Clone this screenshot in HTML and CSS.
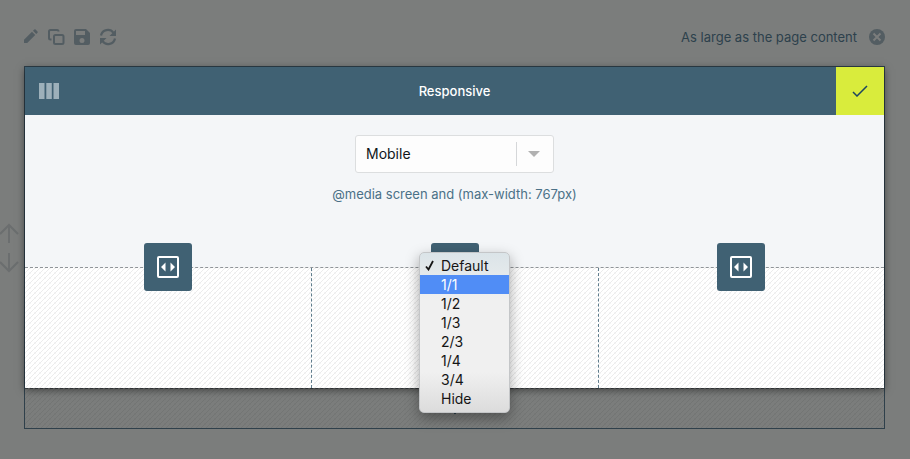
FILE: index.html
```html
<!DOCTYPE html>
<html lang="en">
<head>
<meta charset="utf-8">
<title>Responsive</title>
<link rel="stylesheet" href="styles.css">
</head>
<body>
<div class="toolbar">
  <div class="tools">
    <button class="tool" aria-label="Edit"><svg width="18" height="18" viewBox="0 0 18 18"><path d="M3 11.800V15h3.200l8-8L11 3.800zM15.200 6l1.300-1.300a1 1 0 0 0 0-1.300l-1.900-1.900a1 1 0 0 0-1.300 0L12 2.800z" fill="currentColor"/></svg></button>
    <button class="tool" aria-label="Duplicate"><svg width="18" height="18" viewBox="0 0 18 18"><path d="M4.500 11.500H3.500a1.500 1.500 0 0 1-1.500-1.500V3.500A1.500 1.500 0 0 1 3.500 2H10a1.500 1.500 0 0 1 1.500 1.500M8.500 7H15a1.500 1.500 0 0 1 1.500 1.500v6A1.500 1.500 0 0 1 15 16H8.500A1.500 1.500 0 0 1 7 14.500v-6A1.500 1.500 0 0 1 8.500 7z" fill="none" stroke="currentColor" stroke-width="2"/></svg></button>
    <button class="tool" aria-label="Save"><svg width="18" height="18" viewBox="0 0 18 18"><path fill-rule="evenodd" d="M3 1h10l4 4v10a2 2 0 0 1-2 2H3a2 2 0 0 1-2-2V3a2 2 0 0 1 2-2zm0 2v4h9V3zm6 7a2.500 2.500 0 1 0 0 5 2.500 2.500 0 0 0 0-5z" fill="currentColor"/></svg></button>
    <button class="tool" aria-label="Refresh"><svg width="18" height="18" viewBox="0 0 18 18"><path d="M2 7.500a7 7 0 0 1 12.500-2.700M16 10.500a7 7 0 0 1-12.500 2.700" fill="none" stroke="currentColor" stroke-width="2.200"/><path d="M17 1.500V8h-6.500zM1 16.500V10h6.500z" fill="currentColor"/></svg></button>
  </div>
  <div class="size">
    <span>As large as the page content</span>
    <button class="tool" aria-label="Close"><svg width="16" height="16" viewBox="0 0 16 16"><circle cx="8" cy="8" r="8" fill="currentColor"/><path d="M4.500 4.500l7 7M11.500 4.500l-7 7" stroke="#7b7d7c" stroke-width="2"/></svg></button>
  </div>
</div>

<main class="frame">
  <div class="mover" aria-hidden="true"><svg width="20" height="50" viewBox="0 0 20 50"><path d="M9 20V2M0 11l9-9 9 9M9 30v18M0 39l9 9 9-9" fill="none" stroke="currentColor" stroke-width="2"/></svg></div>
  <section class="dialog">
    <header class="bar">
      <svg class="grip" width="20" height="16" viewBox="0 0 20 16"><path d="M0 0h5.500v16H0zM7.300 0h5.500v16H7.300zM14.500 0H20v16h-5.500z" fill="currentColor"/></svg>
      <h1 class="title">Responsive</h1>
      <button class="confirm" aria-label="Apply"><svg width="16" height="12" viewBox="0 0 16 12"><path d="M1 7l4 4L15 1" fill="none" stroke="currentColor" stroke-width="1.500"/></svg></button>
    </header>
    <div class="settings">
      <div class="picker">
        <select class="device" aria-label="Device"><option>Mobile</option></select>
        <span class="caret"></span>
      </div>
      <p class="query">@media screen and (max-width: 767px)</p>
    </div>
    <div class="columns">
      <div class="column">
        <button class="width" aria-label="Column 1 width"><svg width="22" height="22" viewBox="0 0 22 22"><rect x="1" y="1" width="20" height="20" rx="1" fill="none" stroke="currentColor" stroke-width="2"/><path d="M8.500 6.500v9L4 11zM13.500 6.500v9L18 11z" fill="currentColor"/></svg></button>
      </div>
      <div class="column">
        <button class="width" aria-label="Column 2 width"></button>
        <ul class="menu" role="listbox" aria-label="Column width">
          <li class="option" role="option" aria-selected="true"><svg class="tick" width="9" height="11" viewBox="0 0 9 11"><path d="M1 6.500l2.500 3L8 1" fill="none" stroke="currentColor" stroke-width="1.800"/></svg>Default</li>
          <li class="option active" role="option">1/1</li>
          <li class="option" role="option">1/2</li>
          <li class="option" role="option">1/3</li>
          <li class="option" role="option">2/3</li>
          <li class="option" role="option">1/4</li>
          <li class="option" role="option">3/4</li>
          <li class="option" role="option">Hide</li>
        </ul>
      </div>
      <div class="column">
        <button class="width" aria-label="Column 3 width"><svg width="22" height="22" viewBox="0 0 22 22"><rect x="1" y="1" width="20" height="20" rx="1" fill="none" stroke="currentColor" stroke-width="2"/><path d="M8.500 6.500v9L4 11zM13.500 6.500v9L18 11z" fill="currentColor"/></svg></button>
      </div>
    </div>
  </section>
  <div class="rest"><button class="tool add" aria-label="Add"><svg width="10" height="10" viewBox="0 0 10 10"><path d="M5 0v10M0 5h10" stroke="currentColor" stroke-width="2"/></svg></button></div>
</main>
</body>
</html>
```
FILE: styles.css
```css
* { box-sizing: border-box; }
body {
  margin: 0;
  padding: 24px 25px 30px 24px;
  background: #7b7d7c;
  font: 13px/20px Inter, "Liberation Sans", sans-serif;
  color: #2d414c;
}
button { margin: 0; padding: 0; border: 0; background: none; color: inherit; font: inherit; cursor: pointer; }
svg { display: block; }

.toolbar {
  display: flex;
  justify-content: space-between;
  align-items: center;
  height: 25px;
  margin-bottom: 17px;
}
.tools { display: flex; gap: 8px; margin-left: -3px; }
.size { display: flex; align-items: center; gap: 12px; }
.tool { color: #535d62; }

.frame { position: relative; border: 1px solid #2f404b; }
.mover { position: absolute; left: -25px; top: 156px; color: #6b6e6f; }
.dialog { position: relative; background: #f4f6f8; box-shadow: 0 2px 8px rgba(0, 0, 0, 0.5); }

.bar {
  display: grid;
  grid-template-columns: 48px 1fr 48px;
  align-items: center;
  height: 48px;
  background: #406173;
  color: #fff;
}
.grip { justify-self: center; color: #9db0ba; }
.title { margin: 0; font-size: 13px; font-weight: 500; text-align: center; }
.confirm { display: grid; place-items: center; height: 48px; background: #d9ec3c; color: #1d4560; }

.settings {
  display: flex;
  flex-direction: column;
  align-items: center;
  gap: 11px;
  height: 152px;
  padding-top: 20px;
}
.picker { display: grid; grid-template-columns: 1fr 38px; width: 199px; height: 38px; }
.device {
  grid-area: 1 / 1 / 2 / 3;
  appearance: none;
  margin: 0;
  padding: 0 10px;
  border: 1px solid #dcdedf;
  border-radius: 3px;
  background: #fdfdfd;
  color: #10151a;
  font: 14px/20px Inter, "Liberation Sans", sans-serif;
}
.caret {
  grid-area: 1 / 2;
  display: grid;
  place-items: center;
  height: 24px;
  align-self: center;
  padding-right: 4px;
  border-left: 1px solid #d5d7d9;
  pointer-events: none;
}
.caret::after {
  content: "";
  border: 6px solid transparent;
  border-top-color: #b1b1b1;
  border-bottom: 0;
}
.query { margin: 0; color: #4b7187; }

.columns {
  display: grid;
  grid-template-columns: repeat(3, 1fr);
  height: 121px;
  border-top: 1px dashed #8f9498;
  background: #fff linear-gradient(135deg, #ececec 8%, #fff 12% 40%, #ececec 45% 55%, #fff 60% 88%, #ececec 92%) 0 0 / 5px 5px;
}
.column { position: relative; display: flex; justify-content: center; }
.column + .column { border-left: 1px dashed #5f7c8c; }
.width {
  display: grid;
  place-items: center;
  width: 48px;
  height: 48px;
  margin-top: -25px;
  border-radius: 3px;
  background: #406173;
  color: #fff;
}

.menu {
  position: absolute;
  z-index: 2;
  top: -16px;
  left: 50%;
  width: 91px;
  margin: 0 0 0 -36px;
  padding: 3px 0 4px;
  border: 1px solid #c4c6c8;
  border-radius: 5px;
  background: linear-gradient(#dbe4e8, #f0f0f0 30%, #f0f0f0 75%, #dcdcdc);
  box-shadow: 0 5px 14px rgba(0, 0, 0, 0.35);
  list-style: none;
  color: #151515;
  font-size: 14px;
  line-height: 19px;
}
.option { position: relative; padding-left: 21px; }
.active { background: #508df6; color: #fff; }
.tick { position: absolute; left: 5px; top: 4px; }

.rest {
  display: grid;
  place-items: center;
  height: 40px;
  border-top: 1px dashed #444b4f;
  background: #7b7d7c linear-gradient(135deg, #737574 8%, #7b7d7c 12% 40%, #737574 45% 55%, #7b7d7c 60% 88%, #737574 92%) 0 0 / 5px 5px;
}
.add { color: #2d414c; }
```
